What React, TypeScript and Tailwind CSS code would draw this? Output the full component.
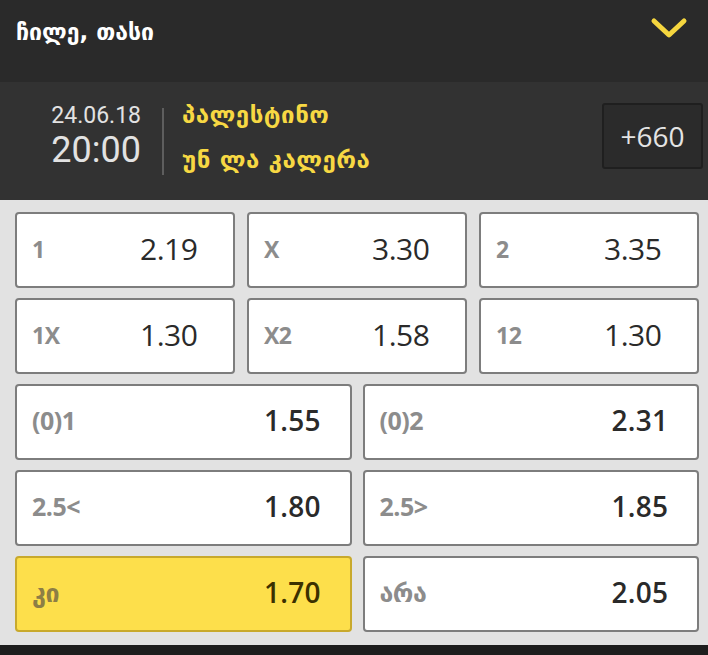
import type { FC } from "react"

const geo = "font-['DejaVu_Sans','Open_Sans',sans-serif]"

type Odd = { label: string; value: string; selected?: boolean }

const rows3: Odd[][] = [
  [
    { label: "1", value: "2.19" },
    { label: "X", value: "3.30" },
    { label: "2", value: "3.35" },
  ],
  [
    { label: "1X", value: "1.30" },
    { label: "X2", value: "1.58" },
    { label: "12", value: "1.30" },
  ],
]

const rows2: Odd[][] = [
  [
    { label: "(0)1", value: "1.55" },
    { label: "(0)2", value: "2.31" },
  ],
  [
    { label: "2.5<", value: "1.80" },
    { label: "2.5>", value: "1.85" },
  ],
  [
    { label: "კი", value: "1.70", selected: true },
    { label: "არა", value: "2.05" },
  ],
]

const OddBox: FC<{ odd: Odd; wide?: boolean }> = ({ odd, wide }) => (
  <div
    className={`flex h-[76px] flex-1 items-center rounded-[4px] border-2 pl-[15px] ${
      odd.selected
        ? "border-[#c8a92c] bg-[#fddf4b]"
        : "border-[#7d7d7d] bg-white"
    }`}
  >
    <span
      className={`${wide ? "w-[232px] text-[25px]" : "w-[108px] text-[23px]"} -mt-[2px] font-['Open_Sans','DejaVu_Sans',sans-serif] font-bold tracking-[-0.5px] ${
        odd.selected ? "text-[#8d7e45]" : "text-[#8c8c8c]"
      }`}
    >
      {odd.label}
    </span>
    <span
      className={`-mt-[4px] font-['Open_Sans',sans-serif] ${
        wide ? "text-[28px] font-semibold tracking-[0.3px]" : "text-[30px] font-normal tracking-[-0.5px]"
      } ${odd.selected ? "text-[#3b3000]" : "text-[#2a2a2a]"}`}
    >
      {odd.value}
    </span>
  </div>
)

export default function App() {
  return (
    <div className="flex h-[655px] w-[708px] flex-col overflow-hidden bg-[#e2e2e2]">
      <div className="flex h-[82px] shrink-0 items-start justify-between bg-[#2a2a2a] pl-[16px] pr-[20px] pt-[15px]">
        <span className={`${geo} text-[23px] font-bold leading-[34px] text-white`}>
          ჩილე, თასი
        </span>
        <svg width="38" height="24" viewBox="0 0 38 24" className="mt-[2px]">
          <path
            d="M4 4 L19 18 L34 4"
            fill="none"
            stroke="#f5d63f"
            strokeWidth="5"
            strokeLinecap="round"
            strokeLinejoin="round"
          />
        </svg>
      </div>

      <div className="flex h-[118px] shrink-0 items-center bg-[#323232] pl-[40px] pr-[5px]">
        <div className="-mt-[10px] flex w-[101px] flex-col items-end font-['Roboto',sans-serif] text-[#e2e2e2]">
          <span className="text-[23px] leading-[27px]">24.06.18</span>
          <span className="text-[36px] leading-[42px]">20:00</span>
        </div>
        <div className="ml-[21px] mr-[18px] h-[67px] w-[2px] bg-[#5e5e5e]" />
        <div className={`${geo} -mt-[6px] flex flex-1 flex-col gap-[12px] text-[24px] font-bold leading-[33px] tracking-[0.5px] text-[#f7d843]`}>
          <span>პალესტინო</span>
          <span>უნ ლა კალერა</span>
        </div>
        <div className="-mt-[10px] flex h-[66px] w-[101px] items-center justify-center rounded-[3px] border-2 border-[#1f1f1f] bg-[#2b2b2b] font-['Open_Sans',sans-serif] text-[28px] text-[#e4e4e4]">
          +660
        </div>
      </div>

      <div className="flex flex-1 flex-col gap-[10px] pl-[15px] pr-[9px] pt-[12px]">
        {rows3.map((row, i) => (
          <div key={i} className="flex gap-[12px]">
            {row.map((odd) => (
              <OddBox key={odd.label} odd={odd} />
            ))}
          </div>
        ))}
        {rows2.map((row, i) => (
          <div key={i} className="flex gap-[11px]">
            {row.map((odd) => (
              <OddBox key={odd.label} odd={odd} wide />
            ))}
          </div>
        ))}
      </div>

      <div className="h-[10px] shrink-0 bg-[#1d1d1d]" />
    </div>
  )
}
